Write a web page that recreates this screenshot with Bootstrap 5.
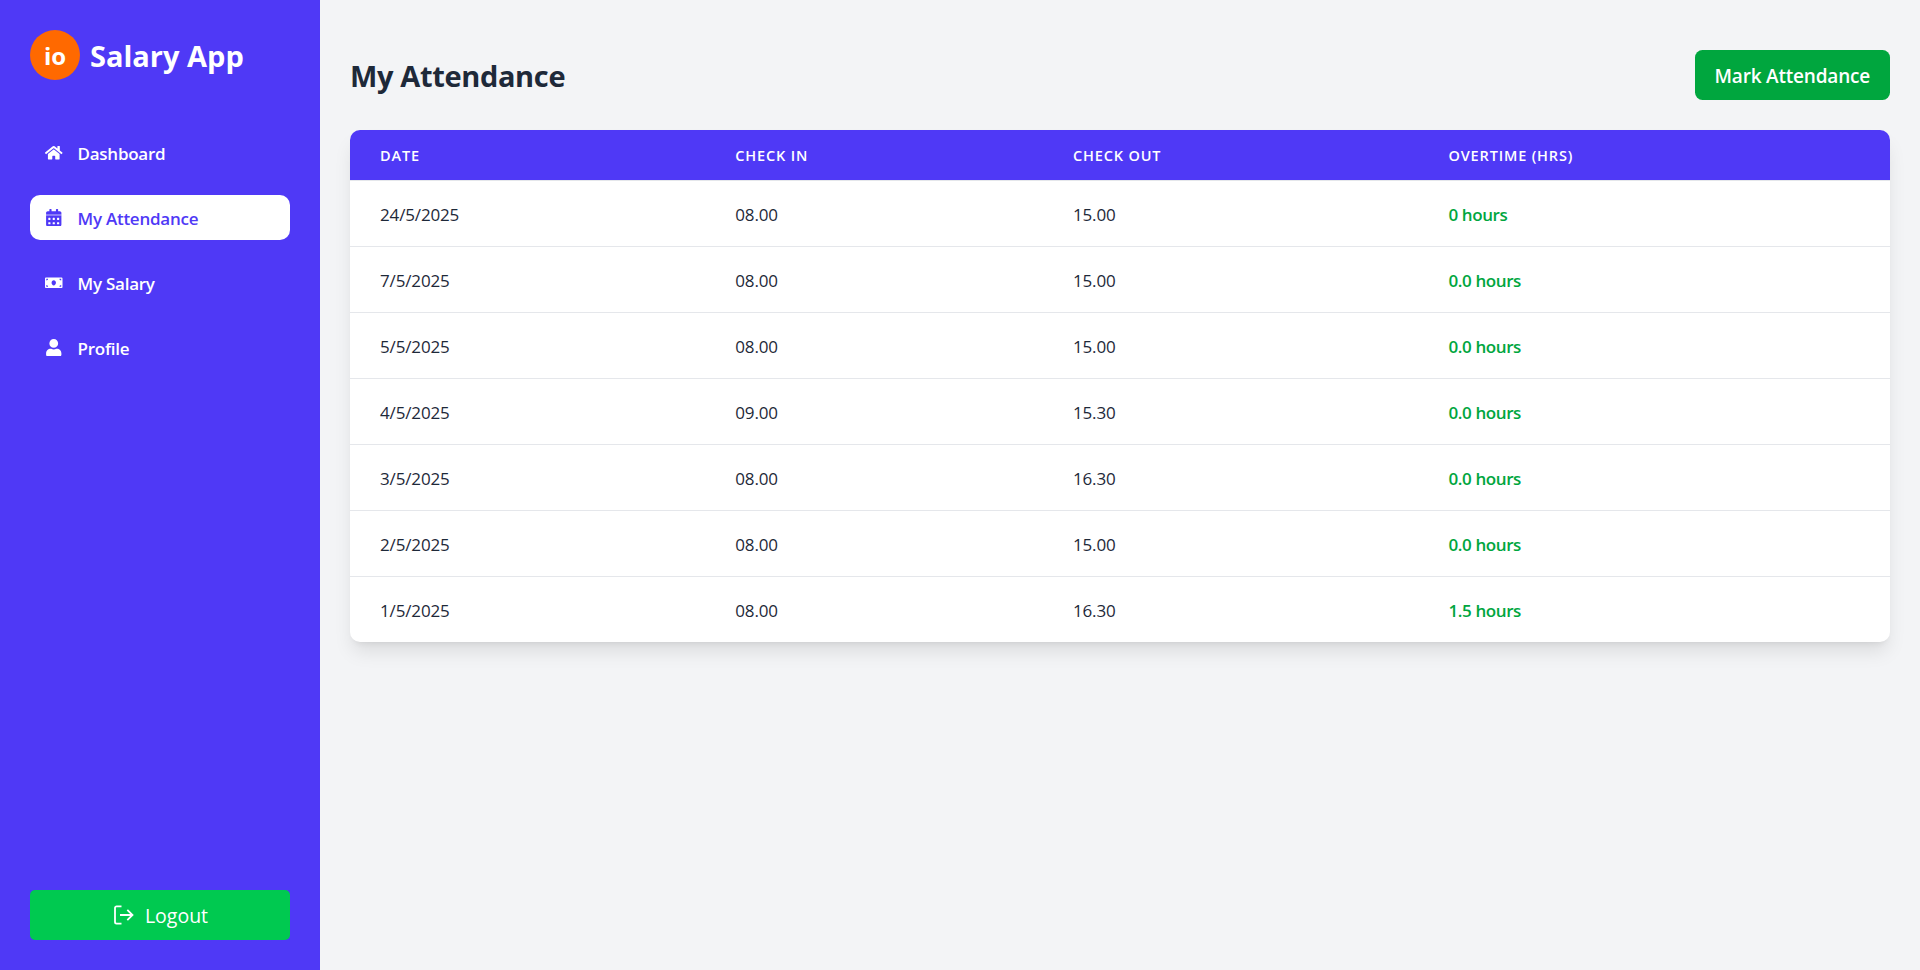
<!DOCTYPE html>
<html lang="en">
<head>
<meta charset="utf-8">
<meta name="viewport" content="width=device-width, initial-scale=1">
<title>Salary App - My Attendance</title>
<link href="https://cdn.jsdelivr.net/npm/bootstrap@5.3.0/dist/css/bootstrap.min.css" rel="stylesheet">
<style>
  :root { --indigo: #4f39f6; --ink: #1e2939; }
  body { font-family: "Open Sans", "Noto Sans", sans-serif; background: #f3f4f6; color: var(--ink); }
  .sidebar { width: 320px; padding: 30px; background: var(--indigo); }
  .brand { gap: 10px; margin-bottom: 50px; }
  .brand-logo { width: 50px; height: 50px; background: #ff6900; font-size: 24px; line-height: 50px; padding-top: 2px; }
  .brand-name { font-size: 29px; line-height: 36px; padding-top: 1px; }
  .side-nav { gap: 20px; }
  .side-nav .nav-link { display: flex; align-items: center; gap: 15px; height: 45px; padding: 0 15px; border-radius: 10px; font-size: 17px; font-weight: 600; letter-spacing: -.25px; color: #fff; }
  .side-nav .nav-link span { padding-top: 2px; }
  .side-nav .nav-link.active { background: #fff; color: var(--indigo); }
  .side-nav svg { width: 17.5px; height: 17.5px; fill: currentColor; flex: none; }
  .btn-logout { height: 50px; gap: 11px; background: #00c950; color: #fff; border: 0; border-radius: 5px; font-size: 19.5px; }
  .btn-logout span { padding-top: 2px; }
  .btn-logout:hover { background: #00a63e; color: #fff; }
  .page { padding: 50px 30px 30px; }
  .page-title { font-size: 29px; line-height: 36px; letter-spacing: -.35px; padding-top: 1px; }
  .btn-mark { height: 50px; padding: 2px 20px 0; background: #00a63e; color: #fff; border: 0; border-radius: 7.5px; font-size: 19px; font-weight: 600; letter-spacing: -.2px; }
  .btn-mark:hover { background: #008236; color: #fff; }
  .sheet { margin-top: 30px; border-radius: 10px; box-shadow: 0 12.5px 18.75px -3.75px rgba(0,0,0,.1), 0 5px 7.5px -5px rgba(0,0,0,.1); }
  .sheet .table { table-layout: fixed; --bs-table-bg: transparent; border-color: #e5e7eb; }
  .sheet th, .sheet td { border: 0; padding: 0 30px; vertical-align: middle; }
  .sheet thead th { height: 50px; background: var(--indigo); color: #fff; font-size: 14.5px; font-weight: 600; letter-spacing: .84px; line-height: 20px; padding-top: 2px; }
  .sheet tbody td { height: 66px; border-top: 1px solid #e5e7eb; font-size: 17px; line-height: 25px; letter-spacing: -.15px; color: var(--ink); padding-top: 2px; }
  .sheet tbody td:last-child { color: #00a63e; font-weight: 600; letter-spacing: -.4px; }
  .col-date { width: 355.3px; }
  .col-in { width: 337.7px; }
  .col-out { width: 375.5px; }
</style>
</head>
<body>
<div class="d-flex vh-100 overflow-hidden">
  <aside class="sidebar d-flex flex-column flex-shrink-0">
    <div class="brand d-flex align-items-center text-white fw-bold">
      <div class="brand-logo rounded-circle d-flex align-items-center justify-content-center">io</div>
      <div class="brand-name">Salary App</div>
    </div>
    <nav class="side-nav nav flex-column">
      <a class="nav-link" href="#">
        <svg viewBox="0 0 576 512"><path d="M280.37 148.26L96 300.11V464a16 16 0 0 0 16 16l112.06-.29a16 16 0 0 0 15.92-16V368a16 16 0 0 1 16-16h64a16 16 0 0 1 16 16v95.64a16 16 0 0 0 16 16.05L464 480a16 16 0 0 0 16-16V300L295.67 148.26a12.19 12.19 0 0 0-15.3 0zM571.6 251.47L488 182.56V44.05a12 12 0 0 0-12-12h-56a12 12 0 0 0-12 12v72.61L318.47 43a48 48 0 0 0-61 0L4.34 251.47a12 12 0 0 0-1.6 16.9l25.5 31A12 12 0 0 0 45.15 301l235.22-193.74a12.19 12.19 0 0 1 15.3 0L530.9 301a12 12 0 0 0 16.9-1.6l25.5-31a12 12 0 0 0-1.7-16.93z"/></svg>
        <span>Dashboard</span>
      </a>
      <a class="nav-link active" href="#">
        <svg viewBox="0 0 448 512"><path fill-rule="evenodd" d="M0 464c0 26.500 21.500 48 48 48h352c26.500 0 48-21.500 48-48V192H0zM76 256h40a12 12 0 0 1 12 12v40a12 12 0 0 1-12 12H76a12 12 0 0 1-12-12v-40a12 12 0 0 1 12-12zM204 256h40a12 12 0 0 1 12 12v40a12 12 0 0 1-12 12h-40a12 12 0 0 1-12-12v-40a12 12 0 0 1 12-12zM332 256h40a12 12 0 0 1 12 12v40a12 12 0 0 1-12 12h-40a12 12 0 0 1-12-12v-40a12 12 0 0 1 12-12zM76 384h40a12 12 0 0 1 12 12v40a12 12 0 0 1-12 12H76a12 12 0 0 1-12-12v-40a12 12 0 0 1 12-12zM204 384h40a12 12 0 0 1 12 12v40a12 12 0 0 1-12 12h-40a12 12 0 0 1-12-12v-40a12 12 0 0 1 12-12zM332 384h40a12 12 0 0 1 12 12v40a12 12 0 0 1-12 12h-40a12 12 0 0 1-12-12v-40a12 12 0 0 1 12-12zM400 64h-48V16c0-8.800-7.200-16-16-16h-32c-8.800 0-16 7.200-16 16v48H160V16c0-8.800-7.200-16-16-16h-32c-8.800 0-16 7.200-16 16v48H48C21.500 64 0 85.500 0 112v48h448v-48c0-26.500-21.500-48-48-48z"/><path fill-opacity=".5" d="M0 158h448v36H0z"/></svg>
        <span>My Attendance</span>
      </a>
      <a class="nav-link" href="#">
        <svg viewBox="0 0 640 512"><path d="M608 64H32C14.330 64 0 78.330 0 96v320c0 17.670 14.330 32 32 32h576c17.670 0 32-14.330 32-32V96c0-17.670-14.330-32-32-32zM48 400v-64c35.350 0 64 28.650 64 64H48zm0-224v-64h64c0 35.350-28.650 64-64 64zm272 176c-44.190 0-80-42.990-80-96 0-53.020 35.820-96 80-96s80 42.980 80 96c0 53.030-35.830 96-80 96zm272 48h-64c0-35.350 28.650-64 64-64v64zm0-224c-35.350 0-64-28.650-64-64h64v64z"/></svg>
        <span>My Salary</span>
      </a>
      <a class="nav-link" href="#">
        <svg viewBox="0 0 448 512"><path d="M224 256c70.700 0 128-57.300 128-128S294.700 0 224 0 96 57.300 96 128s57.300 128 128 128zm89.600 32h-16.700c-22.200 10.200-46.900 16-72.900 16s-50.600-5.800-72.900-16h-16.700C60.200 288 0 348.200 0 422.400V464c0 26.500 21.500 48 48 48h352c26.500 0 48-21.500 48-48v-41.600c0-74.200-60.200-134.400-134.400-134.400z"/></svg>
        <span>Profile</span>
      </a>
    </nav>
    <button type="button" class="btn btn-logout d-flex align-items-center justify-content-center mt-auto w-100">
      <svg width="22" height="22" viewBox="0 0 22 22" fill="none" stroke="currentColor" stroke-width="1.8"><path d="M9.500 2.400H4.600A1.600 1.600 0 0 0 3 4v14a1.600 1.600 0 0 0 1.600 1.600H9.500M8 11H20.500M15.300 5.800 20.500 11 15.300 16.200"/></svg>
      <span>Logout</span>
    </button>
  </aside>

  <main class="page flex-grow-1 overflow-auto">
    <div class="d-flex justify-content-between align-items-center">
      <h1 class="page-title fw-bold mb-0">My Attendance</h1>
      <button type="button" class="btn btn-mark">Mark Attendance</button>
    </div>
    <div class="sheet bg-white overflow-hidden">
      <table class="table mb-0">
        <colgroup><col class="col-date"><col class="col-in"><col class="col-out"><col></colgroup>
        <thead>
          <tr><th>DATE</th><th>CHECK IN</th><th>CHECK OUT</th><th>OVERTIME (HRS)</th></tr>
        </thead>
        <tbody>
          <tr><td>24/5/2025</td><td>08.00</td><td>15.00</td><td>0 hours</td></tr>
          <tr><td>7/5/2025</td><td>08.00</td><td>15.00</td><td>0.0 hours</td></tr>
          <tr><td>5/5/2025</td><td>08.00</td><td>15.00</td><td>0.0 hours</td></tr>
          <tr><td>4/5/2025</td><td>09.00</td><td>15.30</td><td>0.0 hours</td></tr>
          <tr><td>3/5/2025</td><td>08.00</td><td>16.30</td><td>0.0 hours</td></tr>
          <tr><td>2/5/2025</td><td>08.00</td><td>15.00</td><td>0.0 hours</td></tr>
          <tr><td>1/5/2025</td><td>08.00</td><td>16.30</td><td>1.5 hours</td></tr>
        </tbody>
      </table>
    </div>
  </main>
</div>
<script src="https://cdn.jsdelivr.net/npm/bootstrap@5.3.0/dist/js/bootstrap.bundle.min.js"></script>
</body>
</html>
